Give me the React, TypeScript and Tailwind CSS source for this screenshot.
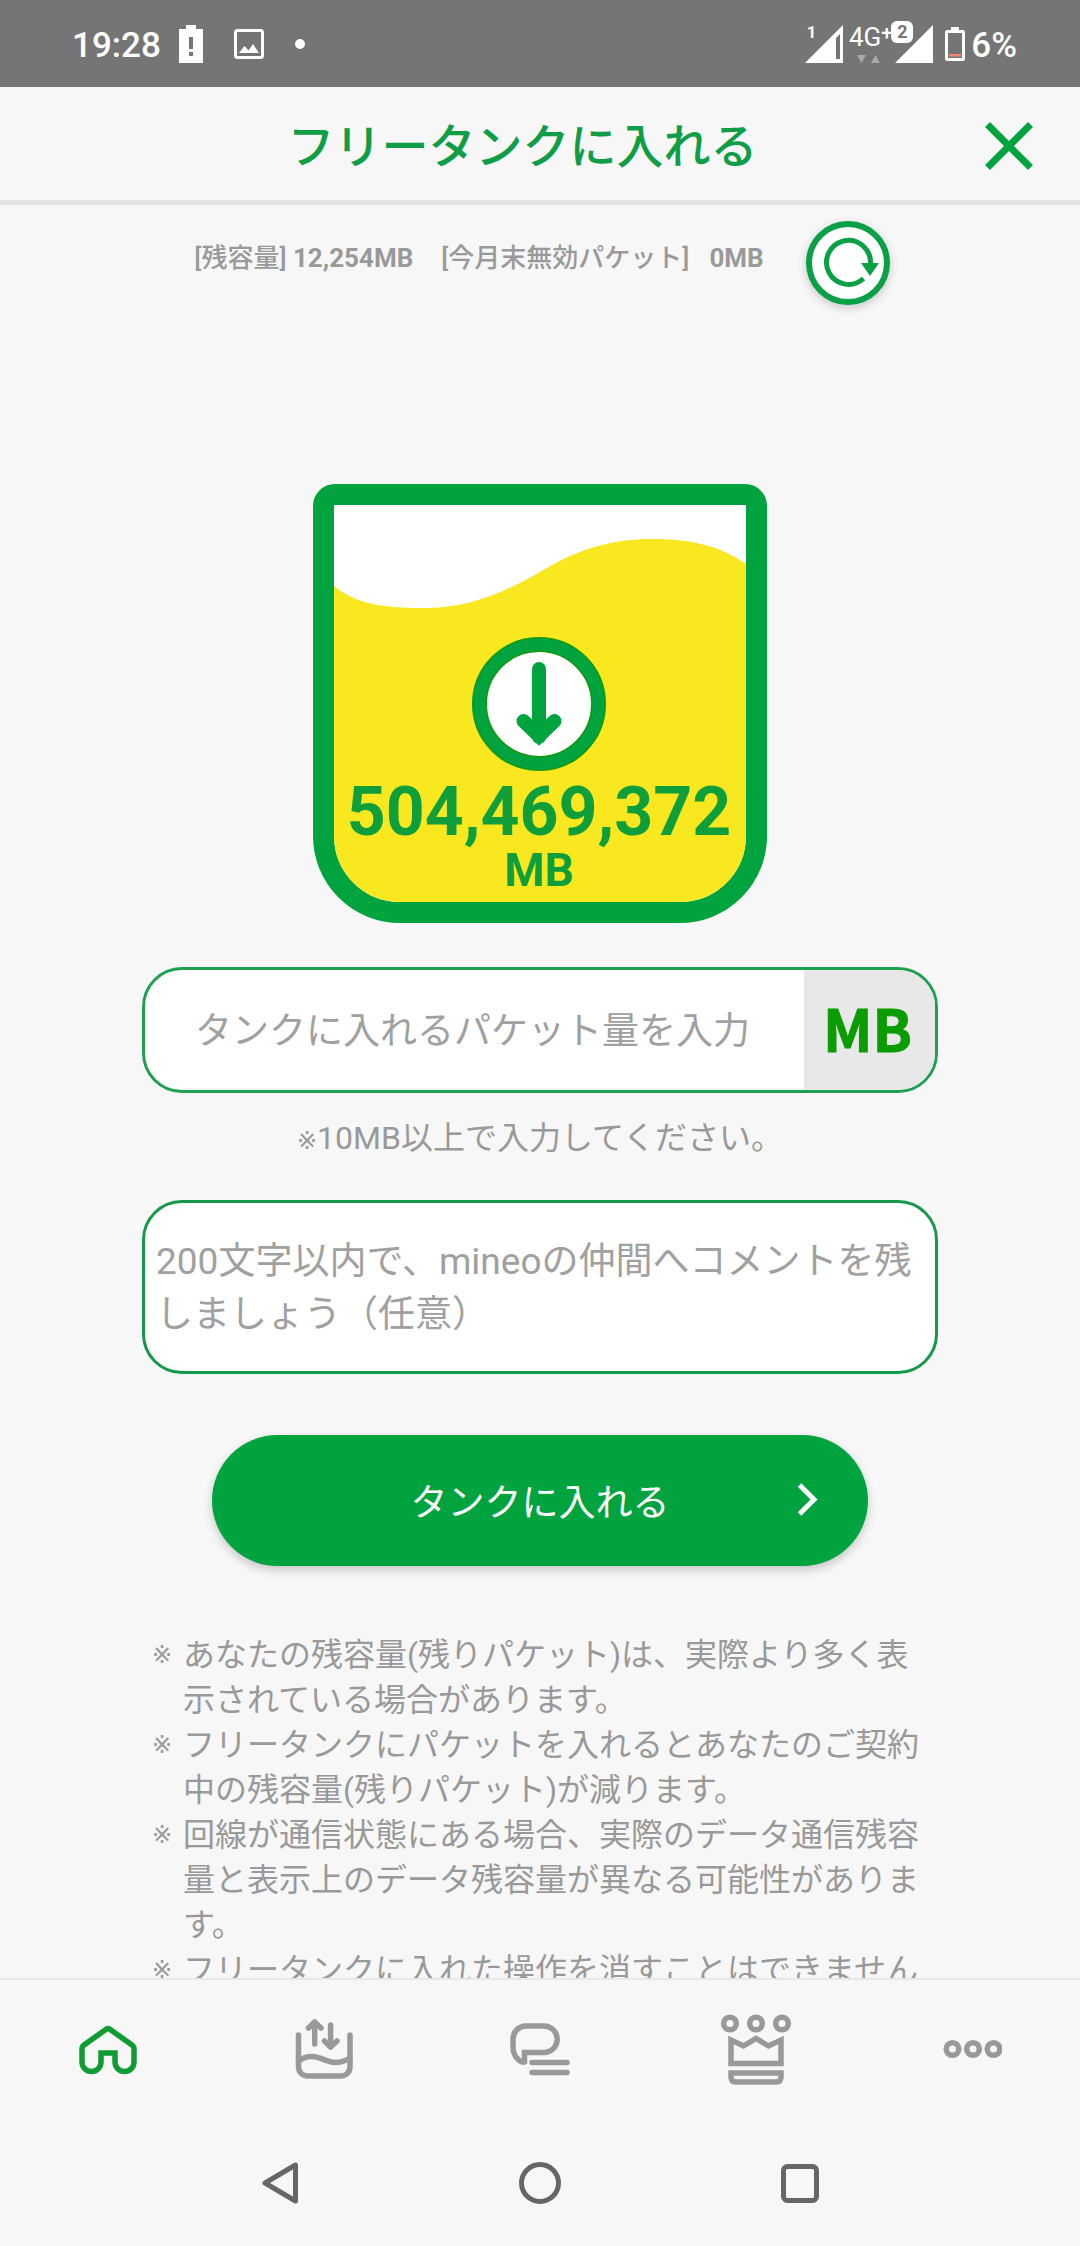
import React from 'react'

const notes = [
    'あなたの残容量(残りパケット)は、実際より多く表示されている場合があります。',
    'フリータンクにパケットを入れるとあなたのご契約中の残容量(残りパケット)が減ります。',
    '回線が通信状態にある場合、実際のデータ通信残容量と表示上のデータ残容量が異なる可能性があります。',
    'フリータンクに入れた操作を消すことはできません',
]

const StatusBar = () => (
    <div className="flex h-[87px] shrink-0 items-center justify-between bg-[#757575] pl-[72px] pr-[63px] text-white">
        <div className="flex items-center">
            <span className="pt-1 text-[35px] font-medium leading-[44px]">19:28</span>
            <svg className="ml-[18px]" width="24" height="38" viewBox="0 0 24 38">
                <path d="M7 0h10v4h7v34H0V4h7z" fill="#fff" />
                <path d="M10 12h4v12h-4zM10 27h4v4h-4z" fill="#757575" />
            </svg>
            <svg className="ml-[31px]" width="30" height="30" viewBox="0 0 30 30">
                <rect x="1.5" y="1.5" width="27" height="27" rx="2" fill="none" stroke="#fff" strokeWidth="3" />
                <path d="M5 24l5.500-7 4 4.500 4.500-6.500 6 9z" fill="#fff" />
            </svg>
            <span className="ml-[31px] h-[10px] w-[10px] rounded-full bg-white" />
        </div>

        <div className="flex items-center">
            <div className="relative">
                <svg width="38" height="38" viewBox="0 0 38 38">
                    <path d="M38 0v38H0z" fill="#fff" />
                    <path d="M31 13l4-4v25h-4z" fill="#757575" />
                </svg>
                <span className="absolute left-[2px] top-0 text-base font-bold leading-4">1</span>
            </div>
            <div className="ml-1.5 flex h-[38px] flex-col justify-between">
                <div className="flex items-start">
                    <span className="text-[26px] leading-6">4G</span>
                    <span className="text-xl font-medium leading-4">+</span>
                </div>
                <svg className="ml-2" width="24" height="8" viewBox="0 0 24 8">
                    <path d="M0 0h9L4.500 8zM14 8h9l-4.500-8z" fill="#a8a8a8" />
                </svg>
            </div>
            <div className="relative ml-[3px]">
                <svg width="38" height="38" viewBox="0 0 38 38">
                    <path d="M38 0v38H0z" fill="#fff" />
                </svg>
                <span className="absolute -left-[4px] -top-1 h-[22px] w-[22px] rounded-md bg-white text-center text-lg font-bold leading-[22px] text-[#757575]">
                    2
                </span>
            </div>
            <svg className="ml-3" width="20" height="34" viewBox="0 0 20 34">
                <path d="M6 0h8v4H6z" fill="#fff" />
                <rect x="1.500" y="4.500" width="17" height="28" rx="1" fill="none" stroke="#fff" strokeWidth="3" />
                <path d="M4 27h12v2.500H4z" fill="#f08a6c" />
            </svg>
            <span className="ml-1.5 pt-1 text-[35px] font-medium leading-[44px]">6%</span>
        </div>
    </div>
)

const Header = () => (
    <header className="flex h-[118px] shrink-0 items-center border-b-[5px] border-[#e4e4e4] pl-[60px] pr-[47px] pt-1">
        <h1 className="flex-1 pt-0.5 text-center text-[47px] font-medium leading-[60px] text-[#0f9d45]">
            フリータンクに入れる
        </h1>
        <button type="button" aria-label="閉じる">
            <svg width="48" height="48" viewBox="0 0 48 48" fill="none" stroke="#00a33e" strokeWidth="7">
                <path d="M2.500 2.500l43 43M45.500 2.500l-43 43" />
            </svg>
        </button>
    </header>
)

const Balance = () => (
    <div className="flex items-start justify-center gap-[42px] pl-1 pt-4">
        <p className="flex pt-[18px] text-[26px] font-medium leading-[38px] text-[#999]">
            <span>
                [残容量] <b>12,254MB</b>
            </span>
            <span className="ml-7">[今月末無効パケット]</span>
            <b className="ml-5">0MB</b>
        </p>
        <button
            type="button"
            aria-label="更新"
            className="flex h-[84px] w-[84px] items-center justify-center rounded-full border-[6px] border-[#0aa046] bg-white shadow-[0_3px_10px_rgba(0,0,0,0.2)]"
        >
            <svg width="72" height="72" viewBox="0 0 72 72">
                <path
                    d="M51.500 51.500A22 22 0 1 1 58.500 36"
                    fill="none"
                    stroke="#0aa046"
                    strokeWidth="5"
                />
                <path d="M49 36h18l-9 13z" fill="#0aa046" />
            </svg>
        </button>
    </div>
)

const Tank = () => (
    <div className="relative mx-auto mt-[179px] h-[439px] w-[454px] overflow-hidden rounded-b-[87px] rounded-t-[22px] border-[21px] border-[#00a33e] bg-white">
        <svg className="absolute inset-0" width="412" height="397" viewBox="0 0 412 397">
            <path
                d="M0 81C25 102 60 103 93 103C140 103 180 82 206 67C245 43 280 34 318 34C360 34 388 42 412 59V397H0Z"
                fill="#f9e71f"
            />
        </svg>
        <div className="relative flex flex-col items-center pr-0.5 pt-[132px] font-bold text-[#0f9f3a]">
            <svg width="134" height="134" viewBox="0 0 134 134">
                <circle cx="67" cy="67" r="59.500" fill="#fff" stroke="#109a10" strokeWidth="15" />
                <circle cx="67" cy="67" r="59.500" fill="none" stroke="#00a33e" strokeWidth="12" />
                <path
                    d="M67 32v68M51.500 84L67 99L82.500 84"
                    fill="none"
                    stroke="#00a33e"
                    strokeWidth="14"
                    strokeLinecap="round"
                />
            </svg>
            <span className="mt-[5px] text-[68px] leading-[72px]">504,469,372</span>
            <span className="text-[46px] leading-[44px]">MB</span>
        </div>
    </div>
)

const TankForm = () => (
    <form className="mt-11" onSubmit={(e) => e.preventDefault()}>
        <div className="mx-auto w-full max-w-[796px]">
            <div className="flex h-[126px] overflow-hidden rounded-[40px] border-[3px] border-[#1fa050] bg-white">
                <input
                    type="text"
                    inputMode="numeric"
                    aria-label="タンクに入れるパケット量"
                    placeholder="タンクに入れるパケット量を入力"
                    className="min-w-0 flex-1 pr-1 pt-1 text-center text-[37px] outline-none placeholder:text-[#a0a0a0]"
                />
                <span className="flex w-[131px] items-center justify-center bg-[#e8e8e8] pb-1.5 pr-1 font-['Noto_Sans_CJK_JP',sans-serif] text-[58px] font-bold leading-[80px] text-[#0a9c00] [-webkit-text-stroke:1px_#0a9c00]">
                    MB
                </span>
            </div>
            <p className="pt-[21px] text-center text-[32px] leading-[48px] text-[#999]">
                <span className="font-['DejaVu_Sans',sans-serif] text-2xl">※</span>10MB以上で入力してください。
            </p>
            <textarea
                maxLength={200}
                aria-label="コメント"
                placeholder="200文字以内で、mineoの仲間へコメントを残しましょう（任意）"
                className="mt-[38px] block h-[174px] w-full resize-none overflow-hidden rounded-[40px] border-[3px] border-[#14984a] bg-white px-[11px] py-8 text-[37px] leading-[53px] outline-none placeholder:text-[#a0a0a0]"
            />
        </div>
        <button
            type="submit"
            className="relative mx-auto mt-[61px] flex h-[131px] w-full max-w-[656px] items-center justify-center rounded-full bg-[#00a33e] pt-1.5 text-[37px] text-white shadow-[0_4px_10px_rgba(0,0,0,0.2)]"
        >
            タンクに入れる
            <svg
                className="absolute right-[50px] top-12"
                width="21"
                height="33"
                viewBox="0 0 21 33"
                fill="none"
                stroke="#fff"
                strokeWidth="5"
            >
                <path d="M2.500 2l14.500 14.500L2.500 31" />
            </svg>
        </button>
    </form>
)

const tabs = [
    {
        label: 'ホーム',
        color: 'text-[#109c33]',
        icon: (
            <svg width="60" height="58" viewBox="0 0 60 58">
                <path d="M28.500 9Q30 8 31.500 9L54 25Q56 26.500 56 29V42A9.500 9.500 0 0 1 37 42V33H23V42A9.500 9.500 0 0 1 4 42V29Q4 26.500 6 25Z" />
            </svg>
        ),
    },
    {
        label: 'フリータンク',
        color: 'text-[#999]',
        icon: (
            <svg width="62" height="64" viewBox="0 0 62 64" strokeLinecap="round" strokeLinejoin="round">
                <path d="M5.500 18V50A9 9 0 0 0 14.500 59H48A9 9 0 0 0 57 50V18" />
                <path d="M5.500 44Q12 39 20 39.500C28 40 33 45 42 45.500Q50 45.500 57 41" />
                <path d="M21.700 27V5M15.500 11L21.700 5L28 11" />
                <path d="M37.600 8V30M31.500 24L37.600 30L44 24" />
            </svg>
        ),
    },
    {
        label: 'コミュニティ',
        color: 'text-[#999]',
        icon: (
            <svg width="62" height="54" viewBox="1 1 62 54" strokeLinecap="round">
                <path d="M18 5H36A13 13 0 0 1 36 31.500H16.500V41Q15 42 12 40Q5 35 5 26V18A13 13 0 0 1 18 5Z" />
                <path d="M24 41.500H59M24 51.500H59" />
            </svg>
        ),
    },
    {
        label: '王国',
        color: 'text-[#999]',
        icon: (
            <svg width="74" height="72" viewBox="0 1 74 72">
                <circle cx="11" cy="11.500" r="6.300" />
                <circle cx="37" cy="11.500" r="6.300" />
                <circle cx="63" cy="11.500" r="6.300" />
                <path d="M12 28L24.500 34L37 26.500L49.500 34L62 28V51.500H12Z" />
                <path d="M12 61H62V65Q62 70 57 70H17Q12 70 12 65Z" />
            </svg>
        ),
    },
    {
        label: 'その他',
        color: 'text-[#999]',
        icon: (
            <svg width="60" height="22" viewBox="0 0 60 22">
                <circle cx="10.500" cy="11" r="6.300" />
                <circle cx="31" cy="11" r="6.300" />
                <circle cx="51.500" cy="11" r="6.300" />
            </svg>
        ),
    },
]

const TabBar = () => (
    <nav className="grid h-[140px] shrink-0 grid-cols-5 border-t-2 border-[#e8e8e8]">
        {tabs.map((tab) => (
            <a
                key={tab.label}
                href="#"
                aria-label={tab.label}
                className={`${tab.color} flex items-center justify-center fill-none stroke-current stroke-[5.5px]`}
            >
                {tab.icon}
            </a>
        ))}
    </nav>
)

const SystemBar = () => (
    <div className="flex h-[128px] shrink-0 items-center justify-center gap-[218px] fill-none stroke-[#666] stroke-[5px] pt-0.5">
        <button type="button" aria-label="戻る">
            <svg width="42" height="44" viewBox="0 0 42 44" strokeLinejoin="round">
                <path d="M36.500 4V40L6 22Z" />
            </svg>
        </button>
        <button type="button" aria-label="ホーム画面">
            <svg width="42" height="42" viewBox="0 0 42 42">
                <circle cx="21" cy="21" r="18.500" />
            </svg>
        </button>
        <button type="button" aria-label="アプリ履歴">
            <svg width="42" height="42" viewBox="0 0 42 42">
                <rect x="4.500" y="4.500" width="33" height="34" rx="4" />
            </svg>
        </button>
    </div>
)

const App = () => (
    <div
        lang="ja"
        className="flex h-screen flex-col bg-[#f7f7f7] font-[Roboto,'Noto_Sans_CJK_JP',sans-serif]"
    >
        <StatusBar />
        <Header />
        <main className="min-h-0 flex-1 overflow-y-auto [scrollbar-width:none]">
            <Balance />
            <Tank />
            <TankForm />
            <ul className="mx-auto mt-[67px] w-full max-w-[776px] pb-10 text-[32px] leading-[45px] text-[#999]">
                {notes.map((note) => (
                    <li key={note} className="flex">
                        <span className="w-[31px] shrink-0 font-['DejaVu_Sans',sans-serif] text-2xl leading-[45px]">
                            ※
                        </span>
                        <span>{note}</span>
                    </li>
                ))}
            </ul>
        </main>
        <TabBar />
        <SystemBar />
    </div>
)

export default App
